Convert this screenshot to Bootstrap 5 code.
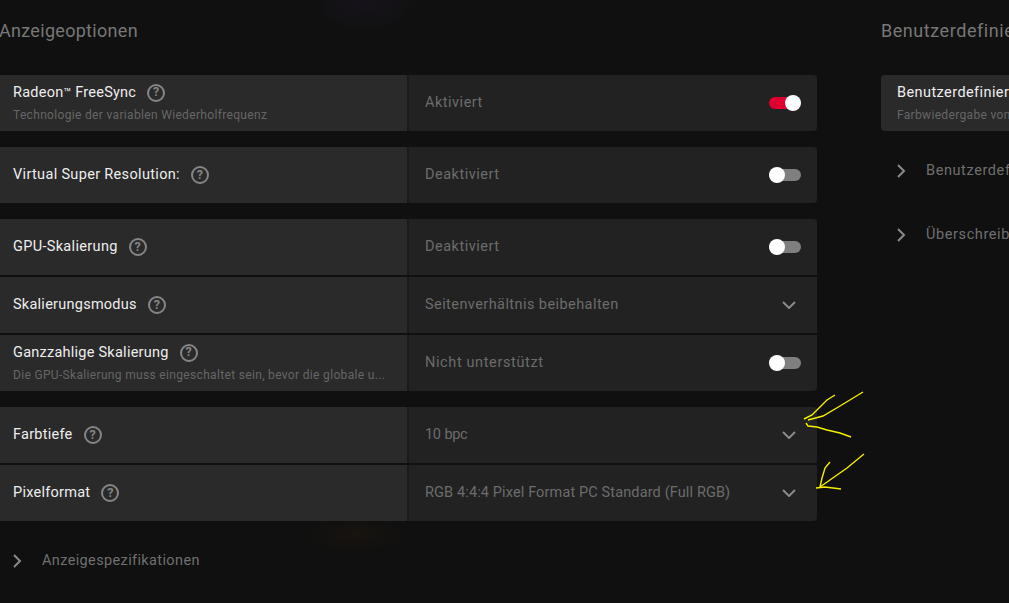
<!doctype html>
<html lang="de">
<head>
<meta charset="utf-8">
<title>Anzeigeoptionen</title>
<link rel="stylesheet" href="https://cdn.jsdelivr.net/npm/bootstrap@5.3.0/dist/css/bootstrap.min.css">
<style>
html,body{height:100%;}
body{overflow:hidden;font-family:"Roboto","Liberation Sans",sans-serif;color:#eee;
 background:
  radial-gradient(ellipse 55px 28px at 365px 5px,#16131a,transparent),
  radial-gradient(ellipse 50px 18px at 355px 535px,#18140f,transparent),
  #101010;}
.shell{width:1009px;height:603px;position:relative;overflow:hidden;}
.panel-main{width:817px;flex:none;}
.panel-side{width:300px;flex:none;margin-left:64px;}
.sec-title{height:75px;margin:0;padding-top:20px;font-size:18px;line-height:22px;font-weight:400;color:#777;letter-spacing:.3px;white-space:nowrap;}
.panel-main .sec-title{margin-left:-1px;}
.panel-side .sec-title{letter-spacing:.55px;}
.opt-group{border-radius:0 4px 4px 0;overflow:hidden;margin-bottom:16px;}
.opt-row{height:56px;background:#1a1a1a;}
.opt-row+.opt-row{margin-top:2px;}
.opt-label{width:407px;flex:none;background:#2a2a2a;padding:0 13px;}
.opt-value{flex:1;margin-left:2px;background:#222;padding:0 16px;color:#6c6c6c;font-size:14.5px;letter-spacing:.5px;}
.val-dense{letter-spacing:.13px;}
.val-digits{letter-spacing:-.45px;word-spacing:1px;}
.val-loose{letter-spacing:.62px;}
.val-snug{letter-spacing:.43px;}
.opt-name{font-size:14.5px;line-height:18px;color:#eee;letter-spacing:.25px;white-space:nowrap;}
.name-wide{letter-spacing:.33px;}
.tm-mark{font-size:12.5px;letter-spacing:0;}
.opt-sub{font-size:12px;line-height:16px;margin-top:5px;color:#666;letter-spacing:.33px;white-space:nowrap;}
.help-dot{width:18px;height:18px;border:2px solid #858585;border-radius:50%;color:#858585;font-size:12.5px;font-weight:700;line-height:1;margin-left:11px;flex:none;}
.tog{width:32px;height:12px;border-radius:6px;background:#7f7f7f;position:relative;flex:none;}
.tog::after{content:"";position:absolute;top:-2px;left:0;width:16px;height:16px;border-radius:50%;background:#fff;}
.tog.is-on{background:#e0002f;}
.tog.is-on::after{left:16px;}
.chev-d{width:14px;height:8px;margin-right:5px;flex:none;}
.chev-r{width:9px;height:14px;flex:none;}
.expander{color:#6f6f6f;font-size:14.5px;letter-spacing:.37px;white-space:nowrap;}
.exp-left{padding:13px 0 0 13px;gap:20px;}
.exp-side{height:64px;padding-left:16px;gap:20px;letter-spacing:.6px;}
.side-card{height:56px;background:#2a2a2a;border-radius:4px;padding:0 16px;margin-bottom:8px;}
.side-card .opt-name{letter-spacing:.42px;}
.scribble{position:absolute;left:0;top:0;pointer-events:none;}
</style>
</head>
<body>
<div class="shell d-flex">
  <main class="panel-main">
    <h1 class="sec-title">Anzeigeoptionen</h1>

    <div class="opt-group">
      <div class="opt-row d-flex">
        <div class="opt-label d-flex flex-column justify-content-center">
          <div class="d-flex align-items-center"><span class="opt-name">Radeon<span class="tm-mark">™</span> FreeSync</span><span class="help-dot d-flex align-items-center justify-content-center">?</span></div>
          <div class="opt-sub">Technologie der variablen Wiederholfrequenz</div>
        </div>
        <div class="opt-value d-flex align-items-center justify-content-between"><span>Aktiviert</span><span class="tog is-on"></span></div>
      </div>
    </div>

    <div class="opt-group">
      <div class="opt-row d-flex">
        <div class="opt-label d-flex align-items-center"><span class="opt-name name-wide">Virtual Super Resolution:</span><span class="help-dot d-flex align-items-center justify-content-center">?</span></div>
        <div class="opt-value d-flex align-items-center justify-content-between"><span>Deaktiviert</span><span class="tog"></span></div>
      </div>
    </div>

    <div class="opt-group">
      <div class="opt-row d-flex">
        <div class="opt-label d-flex align-items-center"><span class="opt-name name-wide">GPU-Skalierung</span><span class="help-dot d-flex align-items-center justify-content-center">?</span></div>
        <div class="opt-value d-flex align-items-center justify-content-between"><span>Deaktiviert</span><span class="tog"></span></div>
      </div>
      <div class="opt-row d-flex">
        <div class="opt-label d-flex align-items-center"><span class="opt-name">Skalierungsmodus</span><span class="help-dot d-flex align-items-center justify-content-center">?</span></div>
        <div class="opt-value d-flex align-items-center justify-content-between"><span class="val-snug">Seitenverhältnis beibehalten</span><svg class="chev-d" viewBox="0 0 14 8"><path d="M1 1l6 6 6-6" fill="none" stroke="#8a8a8a" stroke-width="2"/></svg></div>
      </div>
      <div class="opt-row d-flex">
        <div class="opt-label d-flex flex-column justify-content-center">
          <div class="d-flex align-items-center"><span class="opt-name">Ganzzahlige Skalierung</span><span class="help-dot d-flex align-items-center justify-content-center">?</span></div>
          <div class="opt-sub">Die GPU-Skalierung muss eingeschaltet sein, bevor die globale u...</div>
        </div>
        <div class="opt-value d-flex align-items-center justify-content-between"><span class="val-loose">Nicht unterstützt</span><span class="tog"></span></div>
      </div>
    </div>

    <div class="opt-group">
      <div class="opt-row d-flex">
        <div class="opt-label d-flex align-items-center"><span class="opt-name">Farbtiefe</span><span class="help-dot d-flex align-items-center justify-content-center">?</span></div>
        <div class="opt-value d-flex align-items-center justify-content-between"><span class="val-digits">10 bpc</span><svg class="chev-d" viewBox="0 0 14 8"><path d="M1 1l6 6 6-6" fill="none" stroke="#8a8a8a" stroke-width="2"/></svg></div>
      </div>
      <div class="opt-row d-flex">
        <div class="opt-label d-flex align-items-center"><span class="opt-name">Pixelformat</span><span class="help-dot d-flex align-items-center justify-content-center">?</span></div>
        <div class="opt-value d-flex align-items-center justify-content-between"><span class="val-dense">RGB 4:4:4 Pixel Format PC Standard (Full RGB)</span><svg class="chev-d" viewBox="0 0 14 8"><path d="M1 1l6 6 6-6" fill="none" stroke="#8a8a8a" stroke-width="2"/></svg></div>
      </div>
    </div>

    <div class="expander exp-left d-flex align-items-center"><svg class="chev-r" viewBox="0 0 9 14"><path d="M1 1l6 6-6 6" fill="none" stroke="#8a8a8a" stroke-width="2"/></svg><span>Anzeigespezifikationen</span></div>
  </main>

  <aside class="panel-side">
    <h2 class="sec-title">Benutzerdefinierte Farbe</h2>
    <div class="side-card d-flex flex-column justify-content-center">
      <div class="opt-name">Benutzerdefinierte Farbe</div>
      <div class="opt-sub">Farbwiedergabe von Anzeige anpassen</div>
    </div>
    <div class="expander exp-side d-flex align-items-center"><svg class="chev-r" viewBox="0 0 9 14"><path d="M1 1l6 6-6 6" fill="none" stroke="#8a8a8a" stroke-width="2"/></svg><span>Benutzerdefinierte Farbe</span></div>
    <div class="expander exp-side d-flex align-items-center"><svg class="chev-r" viewBox="0 0 9 14"><path d="M1 1l6 6-6 6" fill="none" stroke="#8a8a8a" stroke-width="2"/></svg><span>Überschreibung</span></div>
  </aside>

  <svg class="scribble" width="1009" height="603" viewBox="0 0 1009 603" fill="none" stroke="#f5f000" stroke-width="1.4">
    <polyline points="804,419 812,415 820,407 827,400 835,395"/>
    <polyline points="808,420 823,416 840,406 863,392"/>
    <polyline points="806,423 808,426 817,427 827,430 840,433 851,437"/>
    <polyline points="864,454 847,468 820,487"/>
    <polyline points="830,462 825,468 822,478 820,487"/>
    <polyline points="816,488 825,487 841,489"/>
  </svg>
</div>
</body>
</html>
